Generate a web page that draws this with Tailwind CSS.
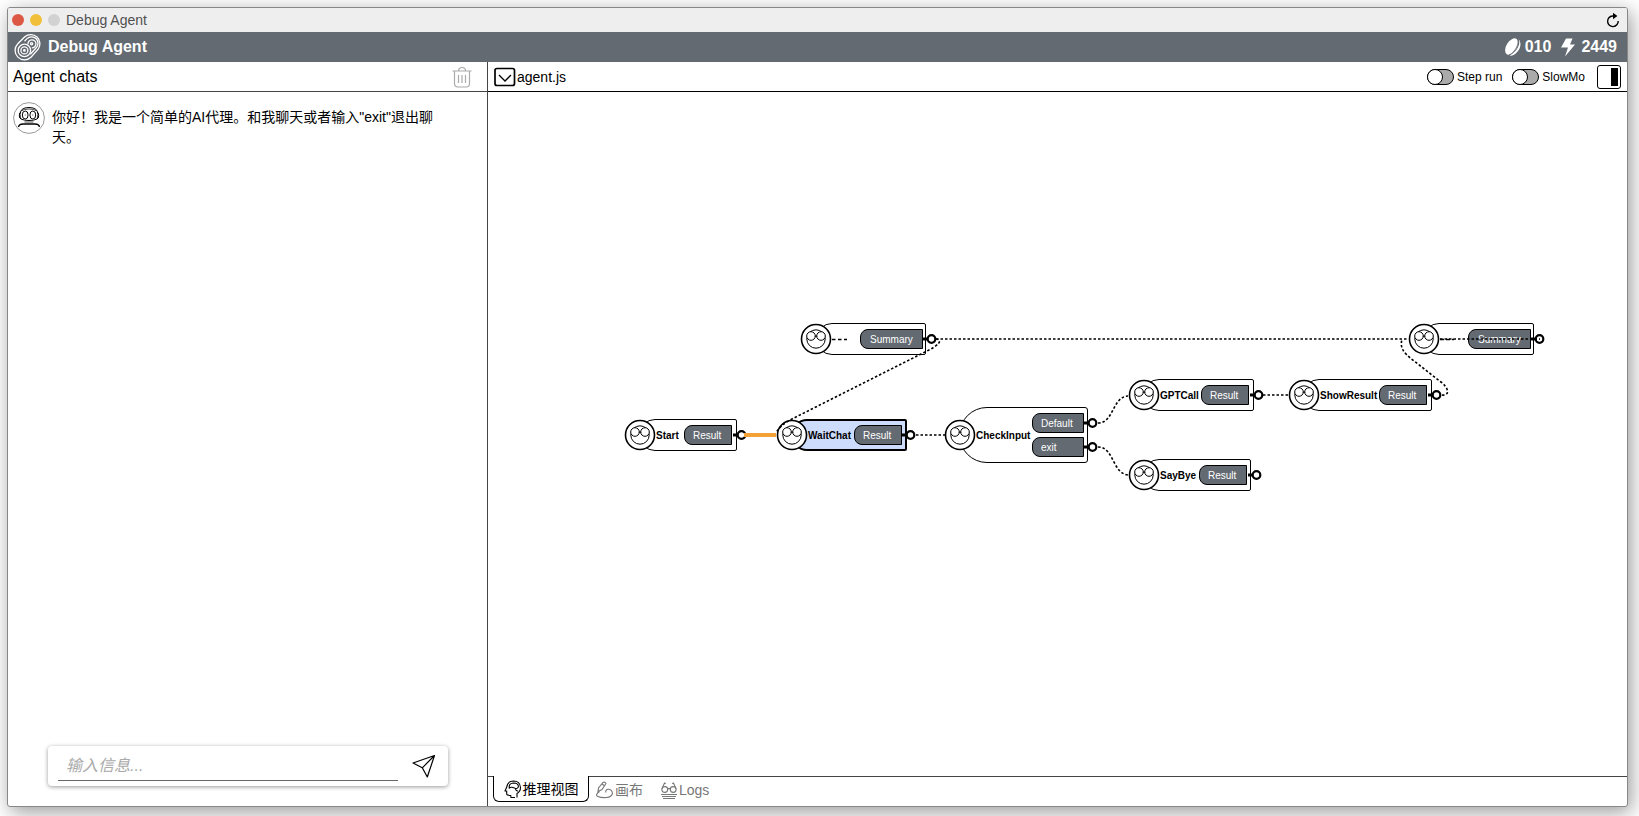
<!DOCTYPE html>
<html lang="zh">
<head>
<meta charset="utf-8">
<title>Debug Agent</title>
<script src="https://cdn.jsdelivr.net/npm/@tailwindcss/browser@4"></script>
</head>
<body class="h-screen overflow-hidden bg-white pt-[7px] pr-[11px] pb-[9px] pl-[7px] font-['Liberation_Sans','Noto_Sans_CJK_SC',sans-serif] text-black">
<svg class="hidden" aria-hidden="true">
  <symbol id="face" viewBox="0 0 32 32">
    <circle cx="16" cy="16" r="14.500" fill="#fff" stroke="#000" stroke-width="1.600"/>
    <circle cx="16" cy="16" r="9.200" fill="none" stroke="#000"/>
    <circle cx="11" cy="13" r="4.300" fill="#fff" stroke="#000"/>
    <circle cx="21" cy="13" r="4.300" fill="#fff" stroke="#000"/>
    <path d="M14.800 13.600q1.200-1.400 2.400 0" fill="none" stroke="#000"/>
  </symbol>
  <symbol id="port" viewBox="0 0 14 12">
    <path d="M0 6h5" stroke="#000" stroke-width="3"/>
    <circle cx="8.500" cy="6" r="3.800" fill="#fff" stroke="#000" stroke-width="2.200"/>
  </symbol>
</svg>
<div class="flex h-full flex-col overflow-hidden rounded-[3px] border border-[#888] bg-white shadow-[3px_5px_20px_rgba(0,0,0,0.4)]">
  <div class="flex h-6 shrink-0 items-center bg-[#eee] pr-1.5 pl-1">
    <div class="flex gap-1.5">
      <button aria-label="Close" class="size-3 rounded-full bg-[#dc5845]"></button>
      <button aria-label="Minimize" class="size-3 rounded-full bg-[#f2bf3a]"></button>
      <button aria-label="Zoom" class="size-3 rounded-full bg-[#d2d2d2]"></button>
    </div>
    <span class="ml-1.5 text-sm text-[#505050]">Debug Agent</span>
    <button aria-label="Reload" class="ml-auto size-4">
      <svg viewBox="0 0 16 16" class="size-4"><path d="M9.600 4H7.500A5.300 5.300 0 1 0 13.200 9" fill="none" stroke="#000" stroke-width="1.400"/><path d="M8 .8 12.400 4 8 7.200z"/></svg>
    </button>
  </div>
  <header class="flex h-[30px] shrink-0 items-center bg-[#636a71] pr-2.5 pl-1.5 text-base font-bold text-white">
    <svg viewBox="0 0 28 28" class="mr-1.5 size-7" fill="none" stroke="#fff" stroke-width="1.300">
      <path d="M3.800 10.800 10.800 3.800A9.200 9.200 0 0 1 24.200 16.200L17.200 24A9.200 9.200 0 0 1 3.800 10.800z"/>
      <path d="M16.300 21.300 22 15A6.500 6.500 0 0 0 13 5.600L10.500 8.200"/>
      <circle cx="10.400" cy="17.400" r="6.200"/>
      <circle cx="10.400" cy="17.400" r="3.500"/>
      <circle cx="10.400" cy="17.400" r=".8"/>
      <path d="M14 11.300a4 4 0 1 1 3.800 3.500"/>
      <circle cx="17.600" cy="10.700" r="1.100"/>
    </svg>
    <h1>Debug Agent</h1>
    <div class="ml-auto flex items-center">
      <svg viewBox="0 0 18 20" class="mr-[3px] h-5 w-[18px]"><g fill="#fff"><ellipse cx="7.600" cy="9.500" rx="5.200" ry="9" transform="rotate(32 7.600 9.500)"/><path d="M14.500 2.200c2.600 4.200-1.400 12.700-8.900 16.400l2 .2c7.400-2.400 11.600-11.900 6.900-16.600z"/></g><path d="M13.900 2c1.500 5-2.800 13.200-8.600 16" fill="none" stroke="#636a71" stroke-width=".9"/></svg>
      <span>010</span>
      <svg viewBox="0 0 16 20" class="mr-[5px] ml-[9px] h-5 w-4" fill="#fff"><path d="M6 1.500h6.500L10 7.500h5L5 19.500l3-9H1z"/></svg>
      <span>2449</span>
    </div>
  </header>
  <main class="flex min-h-0 flex-1">
    <section class="flex w-[480px] shrink-0 flex-col border-r border-[#444]">
      <div class="flex h-[30px] shrink-0 items-center border-b border-[#444] pr-[15px] pl-[5px]">
        <h2 class="text-base">Agent chats</h2>
        <button aria-label="Clear chats" class="ml-auto h-[22px] w-5">
          <svg viewBox="0 0 20 22" class="h-[22px] w-5" fill="none" stroke="#aaa" stroke-width="1.200"><path d="M.5 5h19M6.500 4.800a3.500 3.300 0 0 1 7 0M2.500 5v12.500q0 3.500 3.500 3.500h8q3.500 0 3.500-3.500V5M6.500 9v8M10 9v8M13.500 9v8"/></svg>
        </button>
      </div>
      <div class="flex flex-1 pt-2.5 pr-10 pl-[5px]">
        <svg viewBox="0 0 32 32" class="size-8 shrink-0" fill="none" stroke="#000">
          <circle cx="16" cy="16" r="15.400" stroke="#999"/>
          <path d="M8 17q-1-1.200-1-4.500Q7 5.500 16 5.500t9 7q0 3.300-1 4.500"/>
          <path d="M8 17q-1.700-.5-1.700-3.500T8 10M24 17q1.700-.5 1.700-3.500T24 10M8 17q3 1.500 8 1.500t8-1.500"/>
          <path d="M8.200 9q2.500-2 7.800-2t7.800 2" stroke-width=".7"/>
          <ellipse cx="12.200" cy="13" rx="2.900" ry="4"/><ellipse cx="19.800" cy="13" rx="2.900" ry="4"/>
          <path d="M12.200 12.500v1M19.800 12.500v1" stroke="#555"/>
          <path d="M11.500 20h9" stroke="#888" stroke-width="1.600"/>
          <path d="M5.500 25q.5-3 4.500-3h12q4 0 4.500 3" stroke-width="1.300"/>
        </svg>
        <p class="ml-[7px] pt-[5px] text-sm leading-5">你好！我是一个简单的AI代理。和我聊天或者输入"exit"退出聊天。</p>
      </div>
      <form class="mr-[39px] mb-5 ml-10 flex h-10 shrink-0 items-center rounded bg-white pr-3 pl-2.5 shadow-[0_1px_4px_rgba(0,0,0,0.4)]">
        <input type="text" aria-label="输入信息" placeholder="输入信息..." class="h-[30px] min-w-0 flex-1 border-b border-[#666] px-2 text-base italic outline-none placeholder:text-[#aaa]">
        <button type="button" aria-label="Send" class="ml-[14px] size-6">
          <svg viewBox="0 0 24 24" class="size-6" fill="none" stroke="#000" stroke-width="1.200" stroke-linejoin="round"><path d="M1 9 22.500 1.500 15.300 23 10.300 13.800zM10.300 13.800 22.500 1.500"/></svg>
        </button>
      </form>
    </section>
    <section class="flex min-w-0 flex-1 flex-col">
      <div class="flex h-[30px] shrink-0 items-center border-b border-black pr-1.5 pl-1.5">
        <button aria-label="Choose file" class="mr-px h-5 w-[22px]"><svg viewBox="0 0 22 20" class="h-5 w-[22px]" fill="none" stroke="#000"><rect x="1" y="1.500" width="19.500" height="17" rx="2" stroke-width="1.700"/><path d="M5 8l6 6 6-6" stroke-width="1.300"/></svg></button>
        <span class="text-sm">agent.js</span>
        <label class="ml-auto flex items-center text-xs"><input type="checkbox" class="peer sr-only"><span class="mr-[3px] flex h-4 w-[27px] rounded-full border border-black bg-[#aaa]"><span class="-my-px -ml-px size-4 rounded-full border border-black bg-white"></span></span>Step run</label>
        <label class="ml-2.5 flex items-center text-xs"><input type="checkbox" class="peer sr-only"><span class="mr-[3px] flex h-4 w-[27px] rounded-full border border-black bg-[#aaa]"><span class="-my-px -ml-px size-4 rounded-full border border-black bg-white"></span></span>SlowMo</label>
        <button aria-label="Toggle side panel" class="ml-3 flex size-6 justify-end rounded-[3px] border border-black p-0.5"><span class="h-full w-[7px] bg-black"></span></button>
      </div>
      <div class="relative min-h-0 flex-1 overflow-hidden text-[10px]">
        <div class="absolute top-[327px] left-[151px] flex h-8 w-[98px] items-center justify-between rounded-l-[16px] rounded-r-[2px] border border-black bg-white pr-1 pl-4">
          <svg class="absolute -left-4 size-8"><use href="#face"/></svg><b>Start</b>
          <span class="flex h-5 w-12 items-center rounded-l-lg border border-black bg-[#636a71] pl-2 text-white">Result</span>
          <svg class="absolute -right-[11px] h-3 w-[14px]"><use href="#port"/></svg>
        </div>
        <div class="absolute top-[327px] left-[303px] flex h-8 w-[116px] items-center justify-between rounded-l-[16px] rounded-r-[2px] border-2 border-black bg-[#cddcfc] pr-[3px] pl-[15px]">
          <svg class="absolute -left-[17px] size-8"><use href="#face"/></svg><b>WaitChat</b>
          <span class="flex h-5 w-12 items-center rounded-l-lg border border-black bg-[#636a71] pl-2 text-white">Result</span>
          <svg class="absolute -right-[11px] h-3 w-[14px]"><use href="#port"/></svg>
        </div>
        <div class="absolute top-[231px] left-[328px] flex h-8 w-[110px] items-center justify-end rounded-l-[16px] rounded-r-[2px] border border-black bg-white pr-[2px]">
          <svg class="absolute -left-[17px] size-8"><use href="#face"/></svg>
          <span class="flex h-5 w-[63px] items-center rounded-l-lg border border-black bg-[#636a71] pl-[9px] text-white">Summary</span>
          <svg class="absolute -right-[12px] h-3 w-[14px]"><use href="#port"/></svg>
        </div>
        <div class="absolute top-[315px] left-[471px] flex h-14 w-[129px] items-center justify-between rounded-l-[28px] rounded-r-[3px] border border-black bg-white pr-[3px] pl-4">
          <svg class="absolute -left-4 size-8"><use href="#face"/></svg><b>CheckInput</b>
          <div class="flex flex-col gap-1">
            <span class="relative flex h-5 w-[52px] items-center rounded-l-lg border border-black bg-[#636a71] pl-2 text-white">Default<svg class="absolute -right-[15px] h-3 w-[14px]"><use href="#port"/></svg></span>
            <span class="relative flex h-5 w-[52px] items-center rounded-l-lg border border-black bg-[#636a71] pl-2 text-white">exit<svg class="absolute -right-[15px] h-3 w-[14px]"><use href="#port"/></svg></span>
          </div>
        </div>
        <div class="absolute top-[287px] left-[655px] flex h-8 w-[111px] items-center justify-between rounded-l-[16px] rounded-r-[2px] border border-black bg-white pr-1 pl-4">
          <svg class="absolute -left-4 size-8"><use href="#face"/></svg><b>GPTCall</b>
          <span class="flex h-5 w-12 items-center rounded-l-lg border border-black bg-[#636a71] pl-2 text-white">Result</span>
          <svg class="absolute -right-[11px] h-3 w-[14px]"><use href="#port"/></svg>
        </div>
        <div class="absolute top-[287px] left-[815px] flex h-8 w-[129px] items-center justify-between rounded-l-[16px] rounded-r-[2px] border border-black bg-white pr-1 pl-4">
          <svg class="absolute -left-4 size-8"><use href="#face"/></svg><b>ShowResult</b>
          <span class="flex h-5 w-12 items-center rounded-l-lg border border-black bg-[#636a71] pl-2 text-white">Result</span>
          <svg class="absolute -right-[11px] h-3 w-[14px]"><use href="#port"/></svg>
        </div>
        <div class="absolute top-[367px] left-[655px] flex h-8 w-[108px] items-center justify-between rounded-l-[16px] rounded-r-[2px] border border-black bg-white pr-[3px] pl-4">
          <svg class="absolute -left-4 size-8"><use href="#face"/></svg><b>SayBye</b>
          <span class="flex h-5 w-12 items-center rounded-l-lg border border-black bg-[#636a71] pl-2 text-white">Result</span>
          <svg class="absolute -right-[12px] h-3 w-[14px]"><use href="#port"/></svg>
        </div>
        <div class="absolute top-[231px] left-[935px] flex h-8 w-[111px] items-center justify-end rounded-l-[16px] rounded-r-[2px] border border-black bg-white pr-[2px]">
          <svg class="absolute -left-4 size-8"><use href="#face"/></svg>
          <span class="flex h-5 w-[63px] items-center rounded-l-lg border border-black bg-[#636a71] pl-[9px] text-white">Summary</span>
          <svg class="absolute -right-[12px] h-3 w-[14px]"><use href="#port"/></svg>
        </div>
        <svg class="pointer-events-none absolute inset-0 size-full" fill="none" stroke="#000" stroke-width="1.600" stroke-dasharray="2.500 2">
          <path d="M256 343h32" stroke="#f4a236" stroke-width="4" stroke-dasharray="none"/>
          <path d="M344 247.500h15" stroke-dasharray="3.500 2.500"/>
          <path d="M448 247h472M952 247h100"/>
          <path d="M952 247.500h14" stroke-dasharray="4 2"/>
          <path d="M448 247C456 248 449 254 441 258L304 327Q292 333 288 341"/>
          <path d="M428 343h29M775 303h25"/>
          <path d="M610 331C626 331 624 305 640 304M610 355C626 355 624 381 640 383"/>
          <path d="M954 303C962 304 961 296 953 290L926 269C914 260 912 255 914 247"/>
        </svg>
      </div>
      <div class="flex h-[30px] shrink-0 border-t border-[#444] pl-[5px] text-sm text-[#777]">
        <button class="-mt-px flex h-[26px] w-24 items-center justify-center gap-px rounded-b-md border border-t-0 border-black bg-white pt-px text-black">
          <svg viewBox="0 0 18 18" class="size-[18px]" fill="none" stroke="#000" stroke-width="1.100"><path d="M13 17.500v-4q3.500-2 3.500-6Q16 1 9.500 1 3.500 1.200 2.800 7L1 10.800l1.700.4v3q.3 1.300 4 1.300l.3 2h4"/><path d="M5.300 8Q4.500 3.200 9.500 3q5 .3 4.900 3.300-.4 2.700-3.200 2L8 7.300q-1.500-.2-2.700.7zM11.200 8.300q1 3.200 3 2.700"/></svg>推理视图
        </button>
        <button class="ml-1.5 flex h-[26px] items-center gap-px">
          <svg viewBox="0 0 19 18" class="h-[18px] w-[19px]" fill="none" stroke="#777" stroke-width="1.100"><path d="M3 10.500 3.500 7 8 1.500q2-1 3 1L7 8.500zM7 3l2.800 2M4.500 10.500q-5 3.500-1.500 5 3.500 1.500 8.500 1t6-4q-.5-4.500-4.500-4.300-3 .8-2 3.300"/></svg>画布
        </button>
        <button class="ml-[17px] flex h-[26px] items-center gap-px">
          <svg viewBox="0 0 18 18" class="size-[18px]" fill="none" stroke="#777" stroke-width="1.100"><circle cx="4.800" cy="8.500" r="2.900"/><circle cx="13.200" cy="8.500" r="2.900"/><path d="M7.700 8q1.300-1.200 2.600 0M2 7.800 4.500 2l1.300.8M16 7.800 13.500 2l-1.300.8M1 13.500h16M2 15.500h14M3 17.500h12"/></svg>Logs
        </button>
      </div>
    </section>
  </main>
</div>
</body>
</html>
